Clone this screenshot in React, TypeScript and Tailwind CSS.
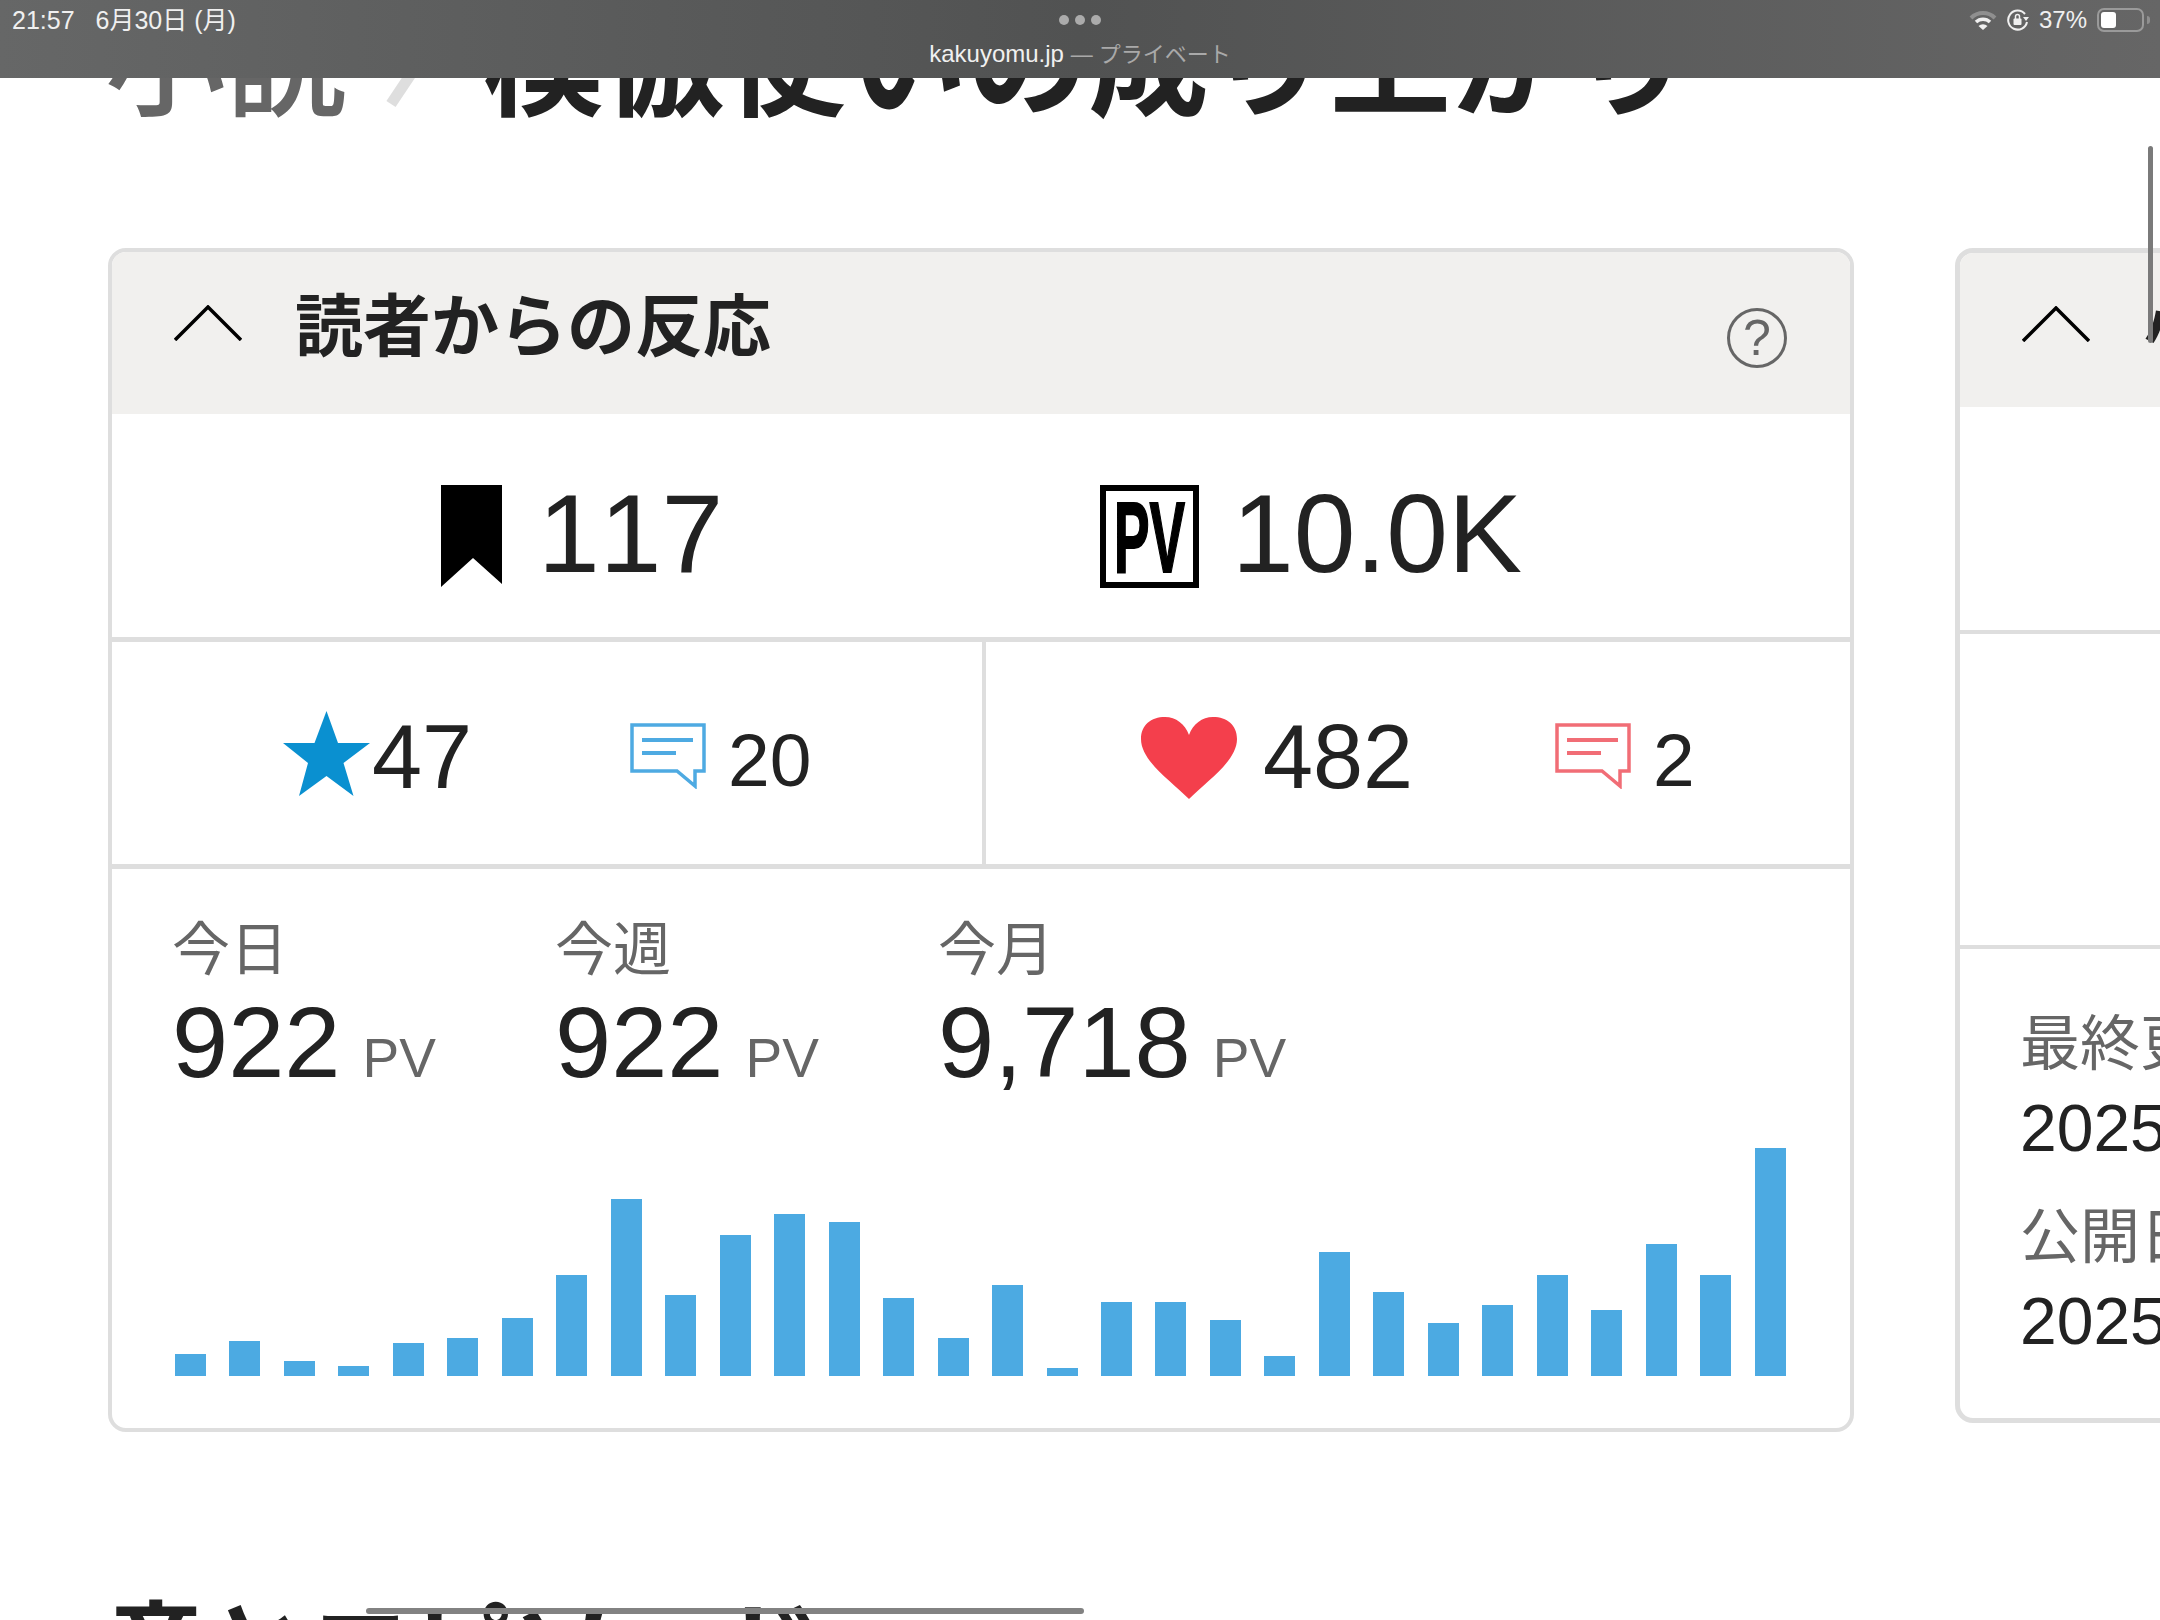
const bars = [22, 35, 15, 10, 33, 38, 58, 101, 177, 81, 141, 162, 154, 78, 38, 91, 8, 74, 74, 56, 20, 124, 84, 53, 71, 101, 66, 132, 101, 228];

const stats = [
  { label: "今日", value: "922" },
  { label: "今週", value: "922" },
  { label: "今月", value: "9,718" },
];

function Chevron() {
  return (
    <svg width="68" height="36" viewBox="0 0 68 36" className="shrink-0">
      <polyline points="1,35 34,2 67,35" fill="none" stroke="#000" strokeWidth="3.5" />
    </svg>
  );
}

function CommentIcon({ color }: { color: string }) {
  return (
    <svg width="76" height="66" viewBox="0 0 76 66">
      <path d="M2 2H74V48H65V63L47 48H2Z" fill="none" stroke={color} strokeWidth="3.5" />
      <path d="M12 17H63M12 30H46" fill="none" stroke={color} strokeWidth="4" />
    </svg>
  );
}

function StatusBar() {
  return (
    <header className="absolute inset-x-0 top-0 h-[78px] bg-linear-to-r from-[#666767] via-[#515252] to-[#666666] text-[25px] leading-none text-[#f0f0f0]">
      <div className="flex items-start justify-between pl-[12px] pr-[10px] pt-[8px]">
        <div className="flex gap-[21px]">
          <span>21:57</span>
          <span>6月30日 (月)</span>
        </div>
        <div className="flex items-center gap-[10px] text-[24px]">
          <svg width="28" height="20" viewBox="0 0 28 20">
            <path d="M2 8A17 17 0 0 1 26 8" fill="none" stroke="#8f8f8f" strokeWidth="4" />
            <path d="M7 12A10 10 0 0 1 21 12" fill="none" stroke="#f0f0f0" strokeWidth="3.5" />
            <path d="M9.5 16L14 20L18.500 16A6.500 6.500 0 0 0 9.500 16Z" fill="#f0f0f0" />
          </svg>
          <svg width="22" height="22" viewBox="0 0 22 22">
            <path d="M18 5A9.500 9.500 0 1 0 20 13" fill="none" stroke="#f0f0f0" strokeWidth="2" />
            <path d="M16 8H22L19 12Z" fill="#f0f0f0" />
            <rect x="6.500" y="9.500" width="8" height="6.500" rx="1" fill="#f0f0f0" />
            <path d="M8.500 10V7.500A2 2 0 0 1 12.500 7.500V10" fill="none" stroke="#f0f0f0" strokeWidth="1.500" />
          </svg>
          <span>37%</span>
          <div className="flex items-center gap-[3px]">
            <div className="h-[24px] w-[47px] rounded-[7px] border-2 border-[#9a9a9a] p-[2px]">
              <div className="h-full w-[15px] rounded-[3px] bg-white" />
            </div>
            <div className="h-[8px] w-[3px] rounded-r-full bg-[#8f8f8f]" />
          </div>
        </div>
      </div>
      <div className="absolute left-[1059px] top-[15px] flex gap-[6px]">
        <span className="size-[10px] rounded-full bg-[#ababab]" />
        <span className="size-[10px] rounded-full bg-[#ababab]" />
        <span className="size-[10px] rounded-full bg-[#ababab]" />
      </div>
      <div className="absolute inset-x-0 top-[42px] text-center text-[24px]">
        kakuyomu.jp <span className="text-[22px] text-[#a9a9a9]">— プライベート</span>
      </div>
    </header>
  );
}

function ReactionsCard() {
  return (
    <section className="h-[1184px] w-[1746px] shrink-0 overflow-hidden rounded-[18px] border-4 border-[#dedede]">
      <div className="flex h-[162px] items-start bg-[#f1f0ee] pl-[62px] pr-[63px]">
        <div className="mt-[53px]">
          <Chevron />
        </div>
        <h2 className="ml-[53px] mt-[41px] text-[68px] font-bold leading-none text-[#222]">読者からの反応</h2>
        <div className="ml-auto mt-[56px] flex size-[60px] items-center justify-center rounded-full border-[3px] border-[#666] text-[50px] leading-none text-[#666]">?</div>
      </div>

      <div className="flex h-[228px] items-start border-b-[5px] border-[#dedede] pl-[329px] pt-[71px] text-[111px] leading-none text-[#222]">
        <div className="flex w-[659px]">
          <svg width="61" height="102" viewBox="0 0 61 102" className="shrink-0">
            <polygon points="0,0 61,0 61,99 32,73 0,102" fill="#000" />
          </svg>
          <span className="ml-[36px] mt-[-6px]">117</span>
        </div>
        <div className="flex">
          <svg width="99" height="103" viewBox="0 0 99 103" className="shrink-0">
            <rect x="3" y="3" width="93" height="97" fill="#fff" stroke="#000" strokeWidth="6" />
            <text x="14" y="87" fontSize="101" fontWeight="700" textLength="71" lengthAdjust="spacingAndGlyphs" fill="#000" stroke="#000" strokeWidth="2">PV</text>
          </svg>
          <span className="ml-[33px] mt-[-6px]">10.0K</span>
        </div>
      </div>

      <div className="flex h-[227px] border-b-[5px] border-[#dedede] leading-none text-[#222]">
        <div className="flex w-[870px] items-start pl-[171px]">
          <div className="flex w-[347px] items-start">
            <svg width="87" height="85" viewBox="0 0 87 85" className="mt-[69px] shrink-0">
              <polygon points="43.500,0 55,32 87,32 60.500,52 70.500,85 43.500,65 16,85 25,52 0,32 31.500,32" fill="#0a90d0" />
            </svg>
            <span className="ml-[2px] mt-[70px] text-[90px]">47</span>
          </div>
          <div className="mt-[81px]">
            <CommentIcon color="#4eaae2" />
          </div>
          <span className="ml-[22px] mt-[81px] text-[75px]">20</span>
        </div>
        <div className="flex flex-1 items-start border-l-4 border-[#dedede] pl-[155px]">
          <div className="flex w-[414px] items-start">
            <svg width="96" height="82" viewBox="0 0 96 82" className="mt-[75px] shrink-0">
              <path d="M48 82C30 64 0 44 0 22C0 8 10 0 24 0C35 0 44 7 48 18C52 7 61 0 72 0C86 0 96 8 96 22C96 44 66 64 48 82Z" fill="#f43f4c" />
            </svg>
            <span className="ml-[26px] mt-[70px] text-[90px]">482</span>
          </div>
          <div className="mt-[81px]">
            <CommentIcon color="#f16d76" />
          </div>
          <span className="ml-[22px] mt-[81px] text-[75px]">2</span>
        </div>
      </div>

      <div className="pl-[60px] pt-[52px] leading-none">
        <div className="flex">
          {stats.map((stat) => (
            <div key={stat.label} className="w-[383px] shrink-0">
              <div className="text-[58px] text-[#666]">{stat.label}</div>
              <div className="mt-[13px] flex items-baseline">
                <span className="text-[101px] text-[#222]">{stat.value}</span>
                <span className="ml-[22px] text-[55px] text-[#666]">PV</span>
              </div>
            </div>
          ))}
        </div>
        <div className="ml-[3px] mt-[55px] flex h-[228px] w-[1611px] items-end justify-between">
          {bars.map((height, index) => (
            <div key={index} className="w-[31px] bg-[#4caae2]" style={{ height }} />
          ))}
        </div>
      </div>
    </section>
  );
}

function InfoCard() {
  return (
    <section className="h-[1175px] w-[800px] shrink-0 overflow-hidden rounded-[18px] border-[5px] border-[#dedede]">
      <div className="flex h-[154px] items-start whitespace-nowrap bg-[#f1f0ee] pl-[62px]">
        <div className="mt-[53px]">
          <Chevron />
        </div>
        <h2 className="ml-[54px] mt-[41px] text-[68px] font-bold leading-none text-[#222]">小説情報</h2>
      </div>
      <div className="h-[227px] border-b-4 border-[#dedede]" />
      <div className="h-[315px] border-b-4 border-[#dedede]" />
      <div className="whitespace-nowrap pl-[60px] pt-[66px] leading-none">
        <div className="text-[60px] text-[#666]">最終更新日</div>
        <div className="mt-[20px] text-[66px] text-[#222]">2025年6月30日</div>
        <div className="mt-[47px] text-[60px] text-[#666]">公開日</div>
        <div className="mt-[20px] text-[66px] text-[#222]">2025年6月1日</div>
      </div>
    </section>
  );
}

export default function App() {
  return (
    <div className="relative h-[1620px] w-[2160px] overflow-hidden bg-white font-['Liberation_Sans','Noto_Sans_CJK_JP',sans-serif] [font-kerning:none]">
      <main className="px-[108px]">
        <div className="flex h-[248px] items-start whitespace-nowrap pt-[4px] text-[121px] leading-none">
          <span className="ml-[-3px] font-medium text-[#666]">小説</span>
          <svg width="44" height="120" viewBox="0 0 44 120" className="ml-[38px] shrink-0">
            <path d="M42 46L6 100" fill="none" stroke="#dedede" strokeWidth="11" />
          </svg>
          <h1 className="ml-[54px] font-bold text-[#222]">模倣使いの成り上がり</h1>
        </div>

        <div className="flex items-start gap-[101px]">
          <ReactionsCard />
          <InfoCard />
        </div>

        <h2 className="ml-[-3px] mt-[169px] whitespace-nowrap text-[102px] font-bold leading-none text-[#222]">章とエピソード</h2>
      </main>

      <StatusBar />
      {/* overlay scrollbars */}
      <div className="absolute right-[7px] top-[146px] h-[197px] w-[5px] rounded-full bg-[#7a7a7a]" />
      <div className="absolute bottom-[6px] left-[366px] h-[6px] w-[718px] rounded-full bg-[#828282]" />
    </div>
  );
}
